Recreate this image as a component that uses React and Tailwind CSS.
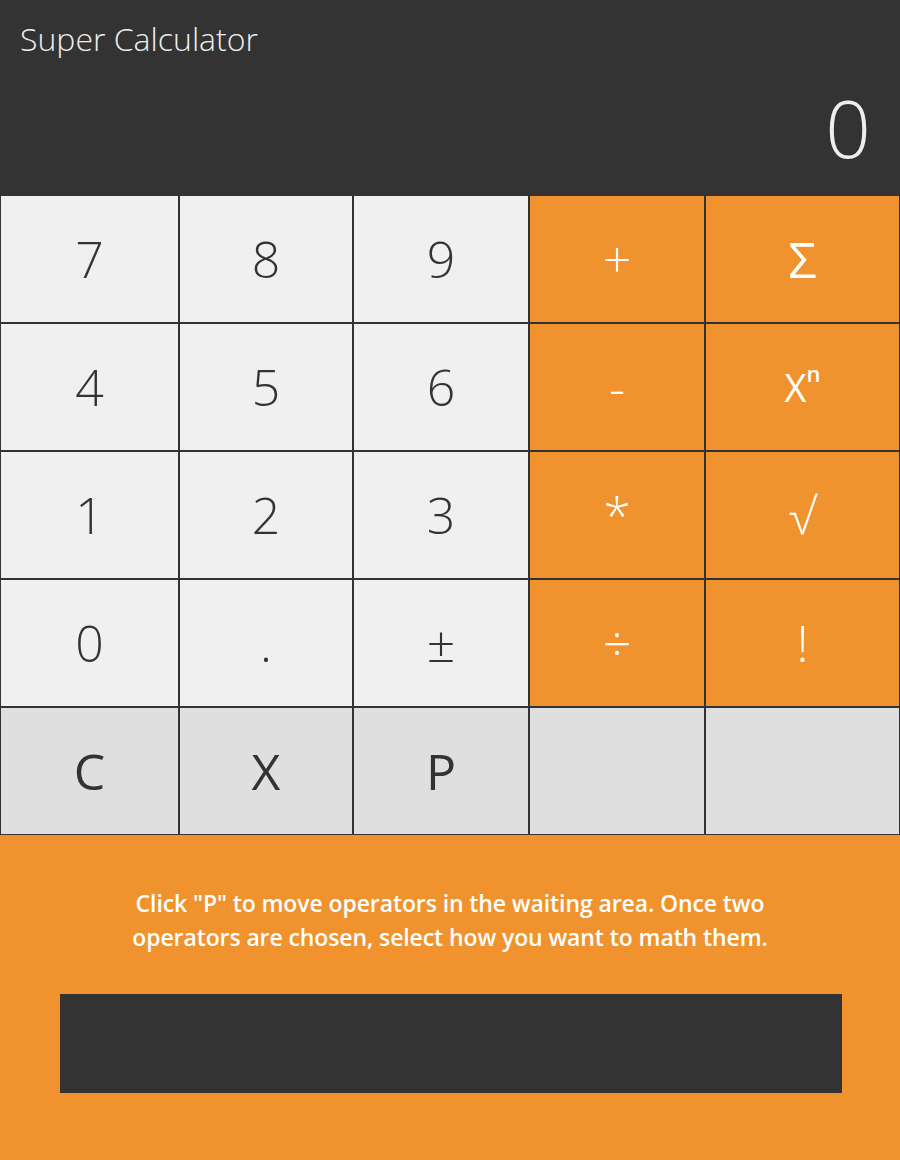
const rows = [
  [
    { label: '7' },
    { label: '8' },
    { label: '9' },
    { label: '+', op: true },
    { label: 'Σ', op: true },
  ],
  [
    { label: '4' },
    { label: '5' },
    { label: '6' },
    { label: '-', op: true },
    { label: 'xn', op: true },
  ],
  [
    { label: '1' },
    { label: '2' },
    { label: '3' },
    { label: '*', op: true },
    { label: '√', op: true },
  ],
  [
    { label: '0' },
    { label: '.' },
    { label: '±' },
    { label: '÷', op: true },
    { label: '!', op: true },
  ],
  [
    { label: 'C', ctl: true },
    { label: 'X', ctl: true },
    { label: 'P', ctl: true },
    { label: '', ctl: true },
    { label: '', ctl: true },
  ],
];

function Key({ k }) {
  let tone = 'bg-[#f0f0f0] text-[#333] font-light';
  if (k.op) tone = 'bg-[#f0932f] text-white font-light';
  if (k.ctl) tone = 'bg-[#dfdfdf] text-[#333] font-normal';

  let content = k.label;
  if (k.label === 'xn') {
    content = (
      <span className="flex items-start text-[38px] font-normal">
        X<span className="text-[22px] leading-none -mt-[6px] font-semibold">n</span>
      </span>
    );
  }
  if (k.label === 'Σ') content = <span className="font-normal">Σ</span>;

  return (
    <button className={`h-[128px] border border-[#333] flex items-center justify-center text-[50px] leading-none ${tone}`}>
      {content}
    </button>
  );
}

export default function App() {
  return (
    <div className="w-[900px] min-h-[1160px] bg-[#f0932f]" style={{ fontFamily: '"Open Sans", "DejaVu Sans", sans-serif' }}>
      <header className="h-[195px] bg-[#333] flex flex-col">
        <h1 className="pl-[20px] pt-[23px] text-[32px] leading-[32px] font-light text-[#eee]">Super Calculator</h1>
        <div className="mt-[32px] pr-[29px] text-right text-[80px] leading-[80px] font-light text-[#eee]">0</div>
      </header>

      <div className="grid grid-cols-[179px_174px_176px_176px_195px]">
        {rows.map((row, i) => row.map((k, j) => <Key key={`${i}-${j}`} k={k} />))}
      </div>

      <section className="px-[60px] pt-[51px] pb-[66px]">
        <p className="mx-auto w-[700px] text-center text-white text-[23px] leading-[34px] font-semibold tracking-[-0.1px]">
          Click "P" to move operators in the waiting area. Once two operators are chosen, select how you want to math them.
        </p>
        <div className="mt-[40px] h-[99px] w-[782px] bg-[#333]"></div>
      </section>
    </div>
  );
}
